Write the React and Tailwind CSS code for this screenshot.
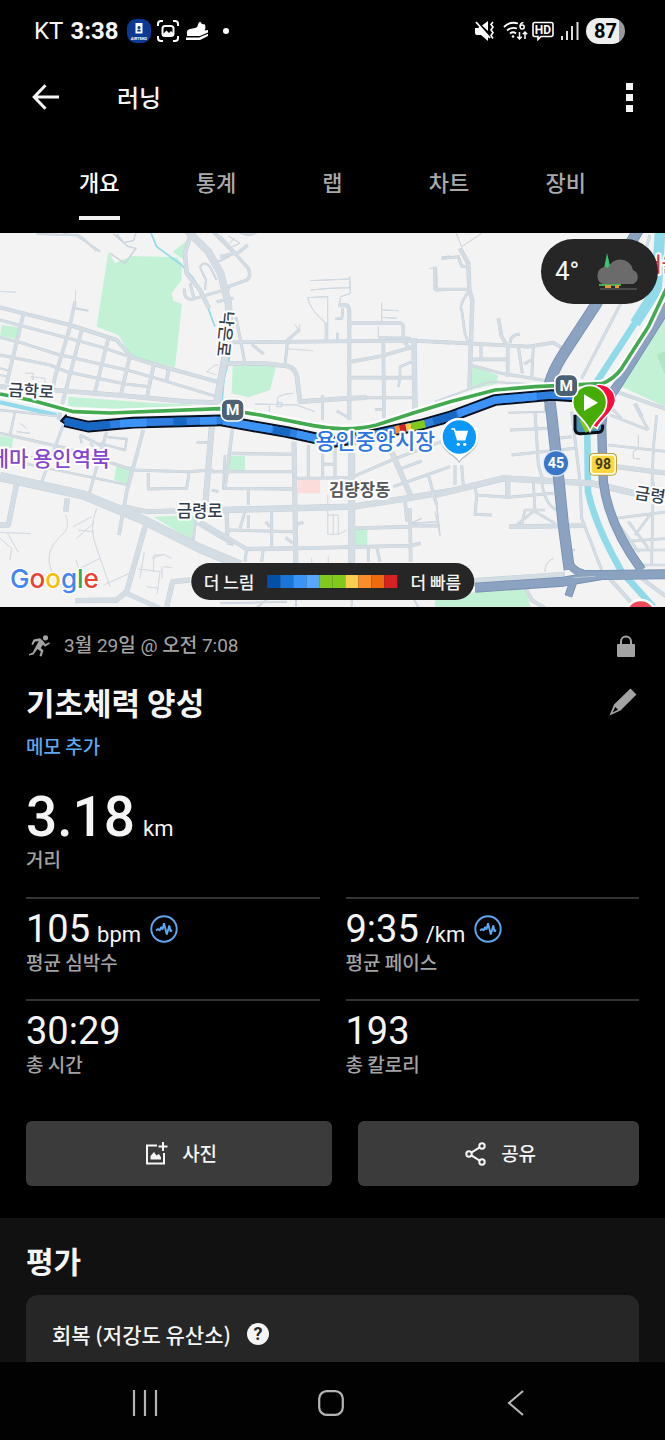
import React from 'react';

const FONT = 'font-[Roboto,"Noto_Sans_CJK_KR",sans-serif]';
const FONT_KR = 'font-["Noto_Sans_CJK_KR",sans-serif]';

const tabs = ['개요', '통계', '랩', '차트', '장비'];

const paceColors = ['#0450a6', '#1976d6', '#3b93f6', '#58a7fc', '#82c91e', '#82c91e', '#f9cd4f', '#f98e2b', '#ec6b0e', '#d62222'];

const stats = [
  { value: '105', unit: 'bpm', label: '평균 심박수', zone: true },
  { value: '9:35', unit: '/km', label: '평균 페이스', zone: true },
  { value: '30:29', label: '총 시간' },
  { value: '193', label: '총 칼로리' },
];

// Map tiles: origin of each tile and its roads as [width, path]
const tiles = [
  {
    x: 0, y: -9,
    roads: [
      [12, 'M0 232L70 250L210 285L350 330L395 382L460 402L650 455'],
      [9, 'M0 270L180 318L300 350L395 382'],
      [9, 'M0 322L60 337L170 372L300 402L380 420L470 445L650 500'],
      [9, 'M0 375L150 405L200 425L375 462L450 470'],
      [14, 'M0 470L160 480L370 497L560 515L655 518'],
      [11, 'M72 245L20 460M212 285L165 440L158 478M245 300L195 490L175 570M325 325L285 485M388 385L362 497M462 402L440 505M505 420L500 455'],
      [10, 'M210 285L225 215'],
      [6, 'M225 235L265 242M0 415L30 422M0 435L25 440'],
      [2, 'M226 215L227 180M0 184L47 187M75 430L100 430L100 450M98 450L95 440L135 445L135 465L160 468'],
      [6, 'M110 12L230 16L300 65M190 12L240 17L290 62'],
      [4, 'M340 12L385 50L408 55L375 100L330 70M350 12L372 38L400 32L408 9'],
      [22, 'M560 0L625 65L662 130L685 220L690 300L668 420L650 520'],
      [13, 'M570 20L555 70L560 130L600 180L627 235'],
      [9, 'M553 176Q552 210 575 208L690 175M570 160L582 205M650 215L700 205'],
      [6, 'M600 112Q610 90 630 110L650 150M600 112L618 150L615 180M655 95L690 78'],
      [12, 'M640 5L700 65'],
      [2, 'M620 425L645 405L655 405M620 425L650 435'],
    ],
  },
  {
    x: 660, y: -9,
    roads: [
      [10, 'M0 20L85 115Q95 140 80 150L25 170M0 80L55 68L83 45M60 5Q85 22 110 5'],
      [3, 'M25 18L60 40L32 52M42 25L30 40'],
      [11, 'M20 337L580 332L690 338'],
      [9, 'M48 262L75 400'],
      [14, 'M15 400L130 400L200 408Q230 414 232 450L240 515L380 505L440 503'],
      [9, 'M440 503L580 503M195 405L203 330L240 298M95 343L131 372'],
      [2, 'M225 283L236 300L240 283M205 357L280 362'],
      [3, 'M389 138L391 190L362 200L358 225M270 152L389 147M272 180L330 175L390 173M263 203L323 200V330M263 203Q270 240 318 280'],
      [8, 'M318 278V330M352 308V330M368 235L366 265L345 267'],
      [12, 'M355 226H380Q387 228 388 245V570'],
      [11, 'M395 279H540Q550 280 550 295V330L565 352'],
      [3, 'M485 218V275M485 240L537 242M485 262L530 265M475 290V320'],
      [7, 'M475 322L572 324'],
      [16, 'M582 325L585 540'],
      [11, 'M490 335L492 565M395 395L485 378L580 350M395 443H575'],
      [8, 'M575 395L540 410V445L535 470M308 495V570M350 543L390 565M465 538H490'],
      [3, 'M105 522L230 525L285 545M148 525V545M175 525L172 505Q180 492 220 490M170 518H186V530H170Z'],
      [9, 'M665 85L690 80M648 140V180L690 178'],
      [2, 'M627 115H650V140'],
    ],
  },
  {
    x: 1305, y: -9,
    roads: [
      [13, 'M75 55L100 100L103 180L112 210L103 480'],
      [9, 'M20 85L75 80M70 80L80 108L98 112'],
      [3, 'M60 0L80 50L140 10'],
      [10, 'M0 178H105M0 110V180'],
      [8, 'M100 185Q70 230 80 240L90 310L100 340'],
      [11, 'M0 335L100 340L280 350L355 338L385 357M190 265L200 320L218 350V440M112 388H220'],
      [9, 'M225 340Q225 315 255 312M138 345V385M250 350L262 430M295 348L290 450M268 402L288 390M105 405L200 430L335 452'],
      [6, 'M0 515L165 455L330 465M220 548L330 545M300 545V570M330 525V545'],
      [9, 'M645 15L620 100L440 445'],
      [11, 'M545 485L700 540M600 520L620 560'],
    ],
  },
  {
    x: 0, y: 546,
    roads: [
      [28, 'M0 185L250 240L420 310L600 400L720 450'],
      [15, 'M370 275L440 290L620 285'],
      [9, 'M0 55L200 100L400 165L560 170L640 165M190 30L125 200M320 50L268 235M445 175V222L560 220L568 168M240 60L320 100'],
      [11, 'M430 45L380 230L357 360'],
      [18, 'M637 15L615 280'],
      [7, 'M310 65L380 72L375 105L300 85M0 130L385 210M240 60L245 85M270 85L280 95'],
      [7, 'M0 -15L185 5M45 -10L30 60'],
      [16, 'M50 205L25 330L0 330M202 250L197 290'],
      [2, 'M197 300Q215 340 180 365Q130 410 155 470M290 280Q265 340 290 400L330 515M275 305L220 335M280 325L230 370M278 350L235 345M0 352L92 356M20 350L55 412M0 370L35 400L30 435'],
      [16, 'M435 335L380 530L350 555L225 557'],
      [14, 'M380 535L480 580'],
      [16, 'M500 575L518 500L570 495'],
      [2, 'M433 410L420 490M415 462L480 470L472 535M455 430L490 418L515 430M485 420L462 420L460 470M485 455L487 490M440 515L475 520M228 435L237 462L300 430M310 510L400 470M490 455L515 458'],
      [8, 'M588 310L577 400M590 325L700 390M680 310L685 390M675 120L670 220L700 220M590 82H630M635 225L655 230'],
      [3, 'M40 20L30 60M50 50L90 55M60 25L80 40M70 120L120 130'],
    ],
  },
  {
    x: 660, y: 546,
    roads: [
      [19, 'M-60 285L10 285L400 275L560 250L690 228'],
      [10, 'M40 20L15 220L220 222M35 115L220 118M-30 170H220'],
      [15, 'M222 80L228 470'],
      [21, 'M395 60V470'],
      [9, 'M265 90V185M308 90V185M345 90V185M230 190L395 188M85 225V270M310 148H345'],
      [16, 'M515 110L575 250'],
      [9, 'M400 185L515 135L690 70M520 215L620 180L690 155M545 160L605 138M625 180L650 270'],
      [4, 'M650 270L660 362M605 310L572 325L655 320'],
      [11, 'M555 260L562 320M570 280L572 440M572 332H655M400 340L570 335M230 400L570 392L602 385'],
      [13, 'M-60 320L80 402L225 400M20 290L22 360'],
      [9, 'M25 345L225 350M75 290L60 340M85 300V340M155 285V395M137 320L150 335M230 328L250 322M197 368L218 385M445 395V440M470 395L480 440M130 400L125 440M80 400L75 440'],
      [2, 'M323 240V358H355V300H323M340 300V358M357 358L380 345M275 430V445M325 425V445'],
      [6, 'M0 565L200 560M228 555V585M395 550V585M100 585L140 555M580 550L600 585'],
    ],
  },
  {
    x: 1305, y: 546,
    roads: [
      [19, 'M0 240L205 190L470 205L600 235'],
      [9, 'M60 150V210M80 150L85 215M120 215L125 245L120 298L170 300M125 240L220 247L355 235'],
      [16, 'M218 190V245'],
      [8, 'M295 200L300 290M320 200Q330 270 365 285M260 330L270 285L330 285M300 290L360 325M245 330L300 285'],
      [14, 'M222 335L450 332'],
      [9, 'M410 -10L435 200L440 310L500 465M225 45L345 40M230 120L420 100M300 -10L310 150L322 190M370 70L410 65'],
      [15, 'M545 155L700 175'],
      [8, 'M520 90L700 110M525 0L640 45M600 -30L640 45M665 0L655 100L650 240M530 -20L560 10'],
      [8, 'M540 310L700 290M560 380L700 370M545 320L612 412M645 300L600 360M655 200L650 450M570 405L700 405M580 320L640 400M610 450H700'],
      [24, 'M110 502L390 482'],
      [12, 'M272 520L290 555L330 580M525 492L600 575M620 490L700 550'],
      [3, 'M330 470Q330 440 355 430M0 290L15 360M610 60V100L595 110V130L615 132'],
      [7, 'M405 405H420'],
    ],
  },
];

const greens = [
  'M325 56L345 91L395 69L530 73L545 91V141L515 181L520 203L546 213L525 403L395 371L355 306L290 281Z',
  'M518 56L572 14L552 81Z',
  'M5 276L55 283L52 319L0 309Z',
  'M205 491L470 511L600 516L400 530L205 520Z',
  'M698 399L790 396L828 401L810 471L745 493L695 481Z',
  'M1417 401L1495 426L1490 452L1415 469Z',
  'M1995 262V521L1865 461L1915 361Q1945 291 1995 262Z',
  'M460 851L590 846L575 922Z',
  'M350 696L395 701L385 753L342 741Z',
  'M0 608L40 616L35 646L0 638Z',
  'M690 668H735V711H685Z',
  'M1062 891H1102V936H1062Z',
  'M1305 1091L1575 1061L1592 1122H1305Z',
];

const highways = [
  [34, 'M1915 -10L1790 211L1705 341Q1650 421 1645 471L1655 546L1677 746L1690 876L1708 1010'],
  [28, 'M2005 215L1850 461Q1805 520 1805 580L1810 746Q1825 876 1925 1011'],
  [30, 'M1425 1064L1690 1046L1805 1026L1995 1024'],
  [24, 'M1705 1090L1722 1040L1790 1030M1700 970Q1708 1010 1750 1022L1810 1024'],
];

const RAIL = 'M0 483L100 503L220 536L330 540L660 527L780 546L940 578Q1040 598 1130 576L1240 540L1350 506L1485 471L1605 461L1805 452Q1840 440 1865 406L1945 281L2000 165';
const ROUTE = 'M195 565L265 581L400 569L660 562L760 580L860 597L1000 627L1090 612L1180 592L1260 576L1350 551L1485 501L1655 486L1735 491';

function MetroBadge({ x, y }) {
  return (
    <g>
      <rect x={x - 37} y={y - 35} width="74" height="70" rx="22" fill="#fff" />
      <rect x={x - 32} y={y - 31} width="64" height="62" rx="18" fill="#4e6275" />
      <text x={x} y={y + 16} textAnchor="middle" fontSize="46" fontWeight="700" fill="#fff" fontFamily="Roboto">M</text>
    </g>
  );
}

function RouteMap() {
  return (
    <svg viewBox="0 0 1995 1122" className="block h-auto w-full bg-[#f4f3f4]" role="img" aria-label="경로 지도">
      {greens.map((d) => <path key={d} d={d} fill="#c3f1d5" />)}
      <path d="M1970 365L1995 355V425Z" fill="#aee7c4" />
      <path d="M895 741H960V781H892Z" fill="#fbdcda" />

      {/* Water */}
      <g fill="none" stroke="#90daea">
        <path strokeWidth="5" d="M453 0L470 41L545 96L580 136L610 186L645 281M690 366L672 440L665 520" />
        <path strokeWidth="13" d="M0 508L170 546" />
        <path strokeWidth="32" d="M1980 -5L1970 170L1905 271" strokeLinejoin="round" />
        <path strokeWidth="20" d="M1915 255L1775 470L1762 606L1764 776Q1785 876 1865 1016L1960 1122" />
      </g>

      {/* Streets */}
      {tiles.map((tile) => (
        <g key={`${tile.x}-${tile.y}`} transform={`translate(${tile.x} ${tile.y})`} fill="none" strokeLinejoin="round">
          {tile.roads.map(([w, d]) => <path key={d} d={d} strokeWidth={w} stroke="#c3ced7" />)}
          {tile.roads.map(([w, d]) => <path key={d} d={d} strokeWidth={w > 3 ? w - 2 : w} stroke="#d5dde4" />)}
        </g>
      ))}

      {/* Highways */}
      <g fill="none" strokeLinejoin="round">
        {highways.map(([w, d]) => <path key={d} d={d} strokeWidth={w} stroke="#7890b2" />)}
        {highways.map(([w, d]) => <path key={d} d={d} strokeWidth={w - 5} stroke="#8ba2c0" />)}
        <path d="M1720 1034L1785 1030" strokeWidth="2" stroke="#c9d5e3" />
      </g>

      {/* Railway */}
      <path d={RAIL} fill="none" stroke="#fff" strokeWidth="24" />
      <path d={RAIL} fill="none" stroke="#43aa50" strokeWidth="11" />

      {/* Recorded route */}
      <g fill="none" strokeLinejoin="round">
        <path d={ROUTE} stroke="#06101f" strokeWidth="35" />
        <path d="M182 564L198 546L212 584Z" fill="#06101f" stroke="#06101f" strokeWidth="4" />
        <path d={ROUTE} stroke="#2e7fe0" strokeWidth="23" />
        <path d="M188 564L198 554L206 578Z" fill="#1767c4" />
      </g>
      <g fill="none" strokeWidth="23">
        <path d="M198 566L265 581L330 575M520 566L560 565M820 590L870 600M1300 565L1370 544" stroke="#1767c4" />
        <path d="M360 572L440 569M600 564L650 563M670 564L760 580L815 589M890 603L950 617M1375 542L1485 501L1610 490" stroke="#3d93f5" />
        <path d="M1185 591L1200 588" stroke="#f98e2b" />
        <path d="M1200 588L1218 584" stroke="#d62222" />
        <path d="M1218 584L1234 581" stroke="#f9cd4f" />
        <path d="M1234 581L1275 572" stroke="#82c91e" />
      </g>
      <path d="M1725 545V590Q1728 603 1742 602L1798 598Q1810 596 1808 575" fill="#4a93b8" stroke="#0b0f14" strokeWidth="9" />
      <path d="M1745 560L1760 590L1790 575" fill="none" stroke="#82c91e" strokeWidth="14" />

      {/* Pins */}
      <path d="M1765 570L1790 453A50 50 0 0 1 1848 505C1842 540 1810 555 1792 590Z" fill="#fff" />
      <path d="M1765 570L1790 457A46 46 0 0 1 1844 505C1838 535 1806 555 1790 582Z" fill="#ff0a3c" />
      <path d="M1770 594C1756 556 1718 546 1718 508A51 51 0 0 1 1820 508C1820 546 1784 556 1770 594Z" fill="#47ad06" stroke="#fff" strokeWidth="5" />
      <path d="M1752 484V534L1794 509Z" fill="#fff" />
      <MetroBadge x={698} y={531} />
      <MetroBadge x={1699} y={458} />

      <path d="M1378 690C1366 668 1320 655 1320 614A58 58 0 0 1 1436 614C1436 655 1390 668 1378 690Z" fill="#7a8894" opacity=".5" />
      <path d="M1378 685C1366 663 1320 652 1320 612A58 58 0 0 1 1436 612C1436 652 1390 663 1378 685Z" fill="#fff" />
      <circle cx="1378" cy="612" r="50" fill="#0b98fb" />
      <path d="M1354 588H1363L1373 620H1394L1401 596H1366" fill="none" stroke="#fff" strokeWidth="5" />
      <path d="M1366 596H1401L1394 618H1373Z" fill="#fff" />
      <circle cx="1375" cy="634" r="5" fill="#fff" />
      <circle cx="1394" cy="634" r="5" fill="#fff" />

      <circle cx="1668" cy="691" r="40" fill="#d8e6fa" />
      <circle cx="1668" cy="691" r="36" fill="#3a76c8" />
      <text x="1668" y="706" textAnchor="middle" fontSize="43" fontWeight="700" fill="#fff" fontFamily="Roboto">45</text>
      <rect x="1767" y="660" width="84" height="68" rx="14" fill="#b9a03c" />
      <rect x="1770" y="663" width="78" height="62" rx="12" fill="#fffbe0" />
      <rect x="1775" y="668" width="68" height="52" rx="8" fill="#fcd63c" />
      <text x="1809" y="709" textAnchor="middle" fontSize="42" fontWeight="700" fill="#3d3a20" fontFamily="Roboto">98</text>
      <circle cx="1922" cy="1147" r="46" fill="#ee4a57" stroke="#fff" strokeWidth="8" />

      {/* Place names */}
      <g fontFamily="'Noto Sans CJK KR', sans-serif" fontWeight="500" stroke="#fff" strokeWidth="12" strokeLinejoin="round" paintOrder="stroke">
        <text x="94" y="492" textAnchor="middle" fontSize="50" fill="#333e4d" transform="rotate(3 94 470)">금학로</text>
        <text x="674" y="318" textAnchor="middle" fontSize="50" fill="#333e4d" transform="rotate(96 674 302)">낙은로</text>
        <text x="599" y="852" textAnchor="middle" fontSize="50" fill="#333e4d">금령로</text>
        <text x="1902" y="796" fontSize="50" fill="#333e4d" transform="rotate(9 1902 796)">금령로</text>
        <text x="331" y="700" textAnchor="end" fontSize="63" fill="#8546cf">테마 용인역북</text>
        <text x="1126" y="648" textAnchor="middle" fontSize="65" fill="#2b76e0">용인중앙시장</text>
        <text x="1079" y="790" textAnchor="middle" fontSize="50" fontWeight="700" fill="#55575c">김량장동</text>
        <text x="1930" y="118" fontSize="60" fill="#dd3244">서울</text>
      </g>
      <text x="30" y="1065" fontFamily="Inter" fontSize="78" fontWeight="500" stroke="#fff" strokeWidth="8" paintOrder="stroke">
        <tspan fill="#4285f4">G</tspan><tspan fill="#ea4335">o</tspan><tspan fill="#fbbc05">o</tspan><tspan fill="#4285f4">g</tspan><tspan fill="#34a853">l</tspan><tspan fill="#ea4335">e</tspan>
      </text>
    </svg>
  );
}

function StatusBar() {
  return (
    <div className="flex h-[62px] items-center justify-between pl-[34px] pr-10">
      <div className="flex items-center">
        <span className="text-[24px] leading-8">KT</span>
        <span className="ml-[7px] text-[24px] font-bold leading-8">3:38</span>
        <svg className="ml-[9px]" width="24" height="24" viewBox="0 0 24 24">
          <rect width="24" height="24" rx="9" fill="#0a3a94" />
          <path d="M8.500 4h7v10.500h-7z" fill="#fff" />
          <path d="M10 12.500a2 2 0 0 1 4 0zM12 7a1.600 1.600 0 1 1 0 3.200A1.600 1.600 0 0 1 12 7z" fill="#0a3a94" />
          <text x="12" y="20.500" textAnchor="middle" fontSize="4" fontWeight="700" fill="#fff" fontFamily="Roboto">AIRTEKO</text>
        </svg>
        <svg className="ml-[6px]" width="22" height="22" viewBox="0 0 22 22" fill="none" stroke="#fff" strokeWidth="2">
          <path d="M1 6V4a3 3 0 0 1 3-3h2M16 1h2a3 3 0 0 1 3 3v2M21 16v2a3 3 0 0 1-3 3h-2M6 21H4a3 3 0 0 1-3-3v-2" />
          <rect x="5.500" y="6" width="11" height="10" rx="2.500" />
          <path d="M6 14l3.500-3.500L12 13l2-2 2.500 2.500V16H6z" fill="#fff" stroke="none" />
        </svg>
        <svg className="ml-[7px]" width="23" height="20" viewBox="0 0 23 20" fill="#fff">
          <path d="M1 13Q0 9 4 8L9 7Q12 6 12 3L14 0.500L16 3L19 3.500L19.500 7L18.500 9.500L22 9V11.500L14 15L1 15Z" />
          <path d="M0 16.500H13L22 12.800V15L14 19H0Z" />
        </svg>
        <span className="ml-[14px] h-[6px] w-[6px] rounded-full bg-white" />
      </div>
      <div className="flex items-center">
        <svg width="20" height="20" viewBox="0 0 20 20" fill="#fff">
          <path d="M0 7h3l2-1.500L13 14v6l-7-6H2Q0 14 0 12zM7 4.500L13 0v10z" />
          <path d="M1 1l14 16" stroke="#fff" strokeWidth="1.800" />
          <path d="M18 1l-2 2.500 2 2.500-2 3 2 2.500-2 3 2 3" fill="none" stroke="#fff" strokeWidth="1.600" />
        </svg>
        <svg className="ml-2" width="25" height="20" viewBox="0 0 25 20" fill="none" stroke="#fff" strokeWidth="1.800">
          <path d="M1 6Q7 0 15 2.500M4 9.500Q8.500 5.500 14 7.500M7 12.500q3-2.500 6 0" />
          <circle cx="10" cy="15.500" r="1.300" fill="#fff" stroke="none" />
          <path d="M20.500 1.500Q17 2 17 5.500" strokeWidth="1.500" />
          <circle cx="19.200" cy="6" r="2" strokeWidth="1.500" />
          <path d="M16.500 11v7M14.300 15.800l2.200 2.200 2.200-2.200M22 18v-7M19.800 13.200L22 11l2.200 2.200" strokeWidth="1.500" />
        </svg>
        <svg className="ml-1" width="22" height="20" viewBox="0 0 22 20">
          <path d="M3 1.500h16q2 0 2 2v10q0 2-2 2H9l-3 3v-3H3q-2 0-2-2v-10q0-2 2-2z" fill="none" stroke="#fff" strokeWidth="1.600" />
          <text x="11" y="12.600" textAnchor="middle" fontSize="12" fontWeight="700" fill="#fff" fontFamily="Roboto">HD</text>
        </svg>
        <svg className="ml-[7px]" width="18" height="20" viewBox="0 0 18 20" fill="#ddd">
          <path d="M0 15h2v4H0zM5 10h2v9H5zM10 5h2v14h-2zM15.500 1h2v18h-2z" />
        </svg>
        <span className="ml-[7px] flex h-[26px] w-[39px] items-center justify-center rounded-full bg-linear-to-r from-[#eee] from-85% to-[#999] to-85% text-[20px] font-bold text-black">87</span>
      </div>
    </div>
  );
}

function ZoneIcon() {
  return (
    <svg className="self-center" width="28" height="28" viewBox="0 0 28 28" fill="none" stroke="#5ea7f2">
      <circle cx="14" cy="14" r="12.700" strokeWidth="1.900" />
      <path d="M6 15.500l2 -1.500 1.800 1.500 1.200 -3.500 1.500 2.500L14 8.200l2.800 11.300 2.500-9 1.200 6 1.500-1.500" strokeWidth="1.900" strokeLinejoin="bevel" />
    </svg>
  );
}

export default function App() {
  return (
    <div className={`flex min-h-screen flex-col bg-black text-[#f5f5f5] ${FONT}`}>
      <StatusBar />

      <header className="flex h-[70px] items-center pl-8 pr-8">
        <button aria-label="뒤로">
          <svg width="27" height="26" viewBox="0 0 27 26" fill="none" stroke="#f5f5f5" strokeWidth="3">
            <path d="M13.500 1.200L2.200 13l11.300 11.800M2 13h25" />
          </svg>
        </button>
        <h1 className={`ml-[58px] text-[24px] font-medium leading-8 ${FONT_KR}`}>러닝</h1>
        <button aria-label="더 보기" className="ml-auto flex flex-col gap-1">
          <span className="h-[7px] w-[7px] bg-[#f5f5f5]" />
          <span className="h-[7px] w-[7px] bg-[#f5f5f5]" />
          <span className="h-[7px] w-[7px] bg-[#f5f5f5]" />
        </button>
      </header>

      <nav className="grid h-[101px] grid-cols-5 px-[41px]">
        {tabs.map((tab, i) => (
          <button key={tab} className="flex items-end justify-center pb-[13px]">
            <span className={`pb-5 text-[22px] font-medium leading-[30px] ${FONT_KR} ${i === 0 ? 'border-b-4 border-[#f0f0f0] text-white' : 'border-b-4 border-transparent text-[#a9a9a9]'}`}>{tab}</span>
          </button>
        ))}
      </nav>

      <div className="relative overflow-hidden">
        <RouteMap />
        {/* Weather */}
        <div className="absolute right-[7px] top-[6px] flex h-[65px] w-[117px] items-center rounded-full bg-[#262626] pl-[14px]">
          <span className="text-[26px]">4°</span>
          <svg className="ml-4" width="46" height="40" viewBox="0 0 46 40">
            <path d="M12 1L8 22H17Z" fill="#3fc46c" />
            <path d="M8 32A9 9 0 0 1 9 15Q12 15 13 16A13 13 0 0 1 38 18A7.500 7.500 0 0 1 38 32Z" fill="#6b6b6b" />
            <path d="M4 32h22v2H4z" fill="#3fb24f" />
            <path d="M10 33h6v3h-6zM20 33h4v3h-4z" fill="#e39a3c" />
            <path d="M5 37h37" stroke="#555" strokeWidth="1.500" />
          </svg>
        </div>
        {/* Pace legend */}
        <div className="absolute bottom-[7px] left-1/2 flex h-[37px] -translate-x-1/2 items-center gap-[13px] whitespace-nowrap rounded-full bg-[#262626] px-[13px] text-[17px] font-medium">
          <span className={FONT_KR}>더 느림</span>
          <span className="flex">
            {paceColors.map((c, i) => <span key={i} className="h-[13px] w-[13px]" style={{ backgroundColor: c }} />)}
          </span>
          <span className={FONT_KR}>더 빠름</span>
        </div>
      </div>

      <main className="px-[26px] pb-8 pt-[25px]">
        <div className="flex h-7 items-center text-[#a3a3a3]">
          <svg className="ml-[3px]" width="21" height="22" viewBox="0 0 21 22" fill="#a3a3a3">
            <circle cx="16.500" cy="2.800" r="2.600" />
            <path d="M4.500 4.500L11 3.200L14.200 6L16.500 9.200L20 7.200L21 8.600L16 11.800L14 9.800L11.800 13L14.500 15.500L12.500 21.500L10.500 21L11.800 16.600L8.500 14L4.500 19.500L0 20.500V19L3.500 17.800L9.800 6L5.800 6.800L4 10L2.400 9.200Z" />
          </svg>
          <span className="ml-[14px] text-[19px]">
            3<span className="font-medium">월</span> 29<span className="font-medium">일</span> @ <span className="font-medium">오전</span> 7:08
          </span>
          <svg className="ml-auto mr-1" width="18" height="23" viewBox="0 0 18 23">
            <rect y="9" width="18" height="13" rx="1" fill="#a3a3a3" />
            <path d="M4 10V6.500a5 5 0 0 1 10 0V10" fill="none" stroke="#a3a3a3" strokeWidth="2" />
          </svg>
        </div>

        <div className="mt-[22px] flex h-10 items-center justify-between">
          <h2 className={`text-[31px] font-bold leading-10 ${FONT_KR}`}>기초체력 양성</h2>
          <button aria-label="편집" className="mr-[2px]">
            <svg width="28" height="28" viewBox="0 0 28 28" fill="#a3a3a3">
              <path d="M21.500 0.500L27.500 6.500L11.500 22.500L0.500 27.500L5 16.500ZM6.300 19L3.500 24.500L9 21.700Z" fillRule="evenodd" />
            </svg>
          </button>
        </div>
        <a href="#memo" className={`mt-[10px] block text-[19px] font-medium leading-7 text-[#5ea7f2] ${FONT_KR}`}>메모 추가</a>

        <p className="mt-[27px] text-[55px] font-medium leading-[60px]">3.18<span className="ml-2 text-[22px] font-normal leading-6">km</span></p>
        <p className={`text-[19px] font-medium leading-6 text-[#a3a3a3] ${FONT_KR}`}>거리</p>

        <div className="mt-[26px] grid grid-cols-2 gap-x-[26px] gap-y-[25px]">
          {stats.map((s) => (
            <div key={s.label} className="border-t-2 border-[#333] pt-2">
              <p className="flex h-[43px] items-baseline text-[38px] leading-[44px]">
                {s.value}
                {s.unit && <span className="ml-[7px] mr-[9px] text-[22px] leading-6">{s.unit}</span>}
                {s.zone && <ZoneIcon />}
              </p>
              <p className={`text-[19px] font-medium leading-6 text-[#a3a3a3] ${FONT_KR}`}>{s.label}</p>
            </div>
          ))}
        </div>

        <div className={`mt-[45px] grid grid-cols-[12fr_11fr] gap-[26px] text-[19px] font-medium ${FONT_KR}`}>
          <button className="flex h-[65px] items-center justify-center gap-[14px] rounded-md bg-[#3b3b3b] pl-1">
            <svg width="23" height="23" viewBox="0 0 23 23" fill="none" stroke="#f5f5f5" strokeWidth="2">
              <path d="M12 3.500H2V21.500H19V11M18 0V9M13.500 4.500H22.500" />
              <path d="M5.500 17.500V14L9 10l2.500 3.500L14 12l2 3.500v2z" fill="#f5f5f5" stroke="none" />
            </svg>
            사진
          </button>
          <button className="flex h-[65px] items-center justify-center gap-[14px] rounded-md bg-[#3b3b3b] pl-1">
            <svg width="22" height="24" viewBox="0 0 22 24" fill="none" stroke="#f5f5f5" strokeWidth="2">
              <circle cx="4" cy="12" r="2.700" />
              <circle cx="17" cy="4" r="2.700" />
              <circle cx="17" cy="20" r="2.700" />
              <path d="M6.300 10.600L14.700 5.400M6.300 13.400L14.700 18.600" />
            </svg>
            공유
          </button>
        </div>
      </main>

      <section className="grow bg-[#111] px-[26px] pt-[22px]">
        <h2 className={`text-[30px] font-bold leading-10 ${FONT_KR}`}>평가</h2>
        <div className="mt-[15px] flex items-center gap-4 rounded-t-xl bg-[#262626] px-[26px] pb-[14px] pt-[25px]">
          <h3 className={`text-[21px] font-medium leading-7 ${FONT_KR}`}>회복 (저강도 유산소)</h3>
          <button aria-label="도움말" className="flex h-[22px] w-[22px] items-center justify-center rounded-full bg-[#f5f5f5] text-[18px] font-bold leading-none text-[#262626]">?</button>
        </div>
      </section>

      <footer className="grid h-[78px] grid-cols-3 place-items-center bg-[#020202] pl-[52px] pr-[55px] pt-1">
        <button aria-label="최근 앱">
          <svg width="26" height="26" viewBox="0 0 26 26" stroke="#b5b5b5" strokeWidth="2.200"><path d="M2 0V26M13 0V26M24 0V26" /></svg>
        </button>
        <button aria-label="홈">
          <svg width="26" height="26" viewBox="0 0 26 26" fill="none" stroke="#b5b5b5" strokeWidth="2.200"><rect x="1.200" y="1.200" width="23.600" height="23.600" rx="7.500" /></svg>
        </button>
        <button aria-label="이전">
          <svg width="26" height="26" viewBox="0 0 26 26" fill="none" stroke="#b5b5b5" strokeWidth="2.200"><path d="M19 1L5 13L19 25" /></svg>
        </button>
      </footer>
    </div>
  );
}
